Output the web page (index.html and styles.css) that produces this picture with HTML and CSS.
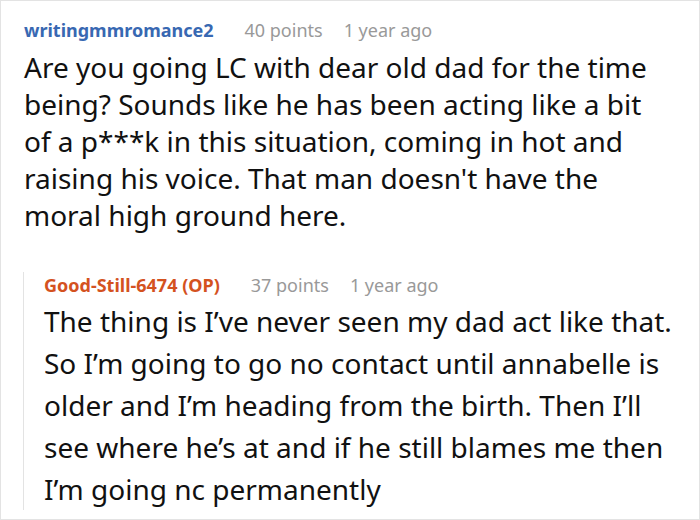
FILE: index.html
```html
<!DOCTYPE html>
<html>
<head>
<meta charset="utf-8">
<link rel="stylesheet" href="styles.css">
</head>
<body>
<div class="frame">
  <div class="comment">
    <div class="meta">
      <span class="user">writingmmromance2</span>
      <span class="info">40 points</span>
      <span class="info">1 year ago</span>
    </div>
    <p class="body main">Are you going LC with dear old dad for the time being? Sounds like he has been acting like a bit of a p***k in this situation, coming in hot and raising his voice. That man doesn't have the moral high ground here.</p>
    <div class="reply">
      <div class="meta">
        <span class="user op">Good-Still-6474 (OP)</span>
        <span class="info">37 points</span>
        <span class="info">1 year ago</span>
      </div>
      <p class="body">The thing is I’ve never seen my dad act like that. So I’m going to go no contact until annabelle is older and I’m heading from the birth. Then I’ll see where he’s at and if he still blames me then I’m going nc permanently</p>
    </div>
  </div>
</div>
</body>
</html>
```

FILE: styles.css
```css
html, body {
  margin: 0;
  padding: 0;
  background: #fff;
}
.frame {
  width: 698px;
  height: 518px;
  border: 1px solid #e3e3e3;
  overflow: hidden;
  font-family: "Noto Sans", "DejaVu Sans", sans-serif;
  color: #111;
}
.comment {
  padding: 16px 6px 0 23px;
}
.meta {
  display: flex;
  align-items: baseline;
  gap: 21px;
  font-size: 18px;
  line-height: 26px;
}
.user {
  font-weight: 700;
  color: #3868b2;
  margin-right: 10px;
}
.user.op {
  color: #d4521f;
}
.info {
  color: #999;
}
.body {
  margin: 6px 0 0;
  font-size: 28px;
  line-height: 37px;
}
.body.main {
  margin-right: 26px;
}
.reply {
  margin-top: 48px;
  border-left: 1px solid #e3e3e3;
  padding-left: 20px;
  margin-left: -1px;
}
.reply .meta {
  margin-top: -10px;
}
.reply .body {
  margin-top: 2px;
  line-height: 42px;
}
```
